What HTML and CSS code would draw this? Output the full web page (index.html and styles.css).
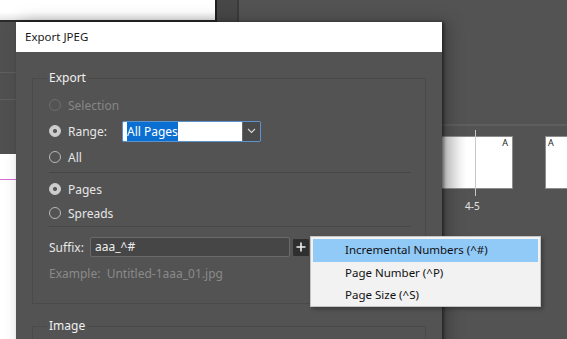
FILE: index.html
```html
<!DOCTYPE html>
<html lang="en">
  <head>
    <meta charset="utf-8">
    <title>Export JPEG</title>
    <meta name="viewport" content="width=device-width, initial-scale=1.0">
    <link rel="stylesheet" href="styles.css">
  </head>
  <body>
    <div class="desk">
      <div class="doc-top"></div>
      <div class="panel-strip"></div>
      <div class="left-pane">
        <div class="pane-bar"></div>
        <div class="pane-page"></div>
      </div>

      <div class="pasteboard">
        <div class="page"><span class="master">A</span></div>
        <div class="page page-right"><span class="master">A</span></div>
        <div class="spine"></div>
        <div class="spread-num">4-5</div>
      </div>

      <div class="dialog">
        <div class="title">Export JPEG</div>
        <div class="body">
          <div class="group">
            <div class="group-title">Export</div>
            <div class="row first disabled"><span class="radio"></span>Selection</div>
            <div class="row"><span class="radio on"></span>Range:
              <div class="combo">
                <span class="combo-text"><span class="sel">All Pages</span></span>
                <span class="combo-btn">
                  <svg width="9" height="6" viewBox="0 0 9 6"><path d="M1 1l3.5 3.5L8 1" fill="none" stroke="#d8d8d8" stroke-width="1.1"/></svg>
                </span>
              </div>
            </div>
            <div class="row"><span class="radio"></span>All</div>
            <div class="sep"></div>
            <div class="row short"><span class="radio on"></span>Pages</div>
            <div class="row short"><span class="radio"></span>Spreads</div>
            <div class="sep tight"></div>
            <div class="suffix-row">
              <span class="suffix-label">Suffix:</span>
              <div class="suffix-input">aaa_^#</div>
              <div class="plus">
                <svg width="10" height="10" viewBox="0 0 10 10"><path d="M5 0.5v9M0.5 5h9" stroke="#f0f0f0" stroke-width="1.6"/></svg>
              </div>
            </div>
            <div class="example">Example:&nbsp; Untitled-1aaa_01.jpg</div>
          </div>
          <div class="group second">
            <div class="group-title">Image</div>
          </div>
        </div>
      </div>

      <div class="menu">
        <div class="item active">Incremental Numbers (^#)</div>
        <div class="item">Page Number (^P)</div>
        <div class="item">Page Size (^S)</div>
      </div>
    </div>
  </body>
</html>
```

FILE: styles.css
```css
*{
    margin: 0;
    padding: 0;
    box-sizing: border-box;
}
body{
    font-family: "Noto Sans", "Open Sans", sans-serif;
    font-size: 12px;
    background: #535353;
}
.desk{
    position: relative;
    width: 567px;
    height: 339px;
    overflow: hidden;
    background: #535353;
}

/* things behind the dialog */
.doc-top{
    position: absolute;
    left: 0;
    top: 0;
    width: 217px;
    height: 22px;
    background: linear-gradient(#ffffff 60%, #e6e6e6);
    border-right: 2px solid #1f1f1f;
    border-bottom: 2px solid #2a2a2a;
}
.panel-strip{
    position: absolute;
    left: 217px;
    top: 0;
    width: 22px;
    height: 22px;
    background: #474747;
    border-right: 2px solid #3b3b3b;
}
.left-pane{
    position: absolute;
    left: 0;
    top: 22px;
    width: 16px;
    height: 317px;
    display: flex;
    flex-direction: column;
}
.pane-bar{
    height: 132px;
    background: linear-gradient(#505050 50px, #5f5f5f 50px, #5f5f5f 51px, #505050 51px, #505050 77px, #5f5f5f 77px, #5f5f5f 78px, #505050 78px);
}
.pane-page{
    flex: 1;
    background: linear-gradient(#ffffff 25px, #d86bd8 25px, #d86bd8 26px, #ffffff 26px);
}
.pasteboard{
    position: absolute;
    left: 400px;
    top: 124px;
    width: 167px;
    height: 100px;
    border-top: 2px solid #5e5e5e;
    padding-top: 10px;
    display: flex;
    gap: 32px;
}
.page{
    position: relative;
    width: 113px;
    height: 53px;
    flex-shrink: 0;
    background: linear-gradient(90deg, #d4d4d4 40px, #ffffff 65px);
    border: 1px solid #8c8c8c;
}
.page-right{
    background: #ffffff;
}
.master{
    position: absolute;
    top: 1px;
    right: 4px;
    font-size: 9px;
    line-height: 10px;
    color: #222;
}
.page-right .master{
    right: auto;
    left: 2px;
}
.spine{
    position: absolute;
    left: 75px;
    top: 4px;
    width: 1px;
    height: 66px;
    background: #c8c8c8;
}
.spread-num{
    position: absolute;
    left: 65px;
    top: 73px;
    font-size: 10px;
    color: #e4e4e4;
}

/* dialog */
.dialog{
    position: absolute;
    left: 16px;
    top: 22px;
    width: 426px;
    height: 330px;
    background: #535353;
    box-shadow: 2px 0 3px rgba(0,0,0,.45), 6px 0 16px rgba(0,0,0,.25);
}
.title{
    height: 30px;
    line-height: 30px;
    padding-left: 9px;
    background: #ffffff;
    color: #1a1a1a;
    font-size: 11.5px;
}
.body{
    padding: 26px 16px 0;
}
.group{
    border: 1px solid #4a4a4a;
    padding: 0 14px 20px 16px;
    color: #e6e6e6;
}
.group-title{
    width: fit-content;
    margin: -9px 0 0 -2px;
    padding: 0 2px;
    height: 16px;
    line-height: 16px;
    background: #535353;
    color: #f0f0f0;
}
.row{
    height: 26px;
    display: flex;
    align-items: center;
}
.row.first{
    margin-top: 6px;
}
.row.short{
    height: 24px;
}
.disabled{
    color: #868686;
}
.radio{
    width: 12px;
    height: 12px;
    border-radius: 50%;
    border: 1px solid #b8b8b8;
    margin-right: 7px;
    flex-shrink: 0;
}
.disabled .radio{
    border-color: #6e6e6e;
}
.radio.on{
    border-color: #cdcdcd;
    background: radial-gradient(circle, #5a5a5a 1.6px, #cdcdcd 2.4px);
}
.combo{
    display: flex;
    width: 139px;
    height: 21px;
    margin-left: 15px;
    border: 1px solid #5b93cf;
    border-radius: 2px;
    background: #ffffff;
}
.combo-text{
    flex: 1;
    padding: 1px 0 0 4px;
    line-height: 17px;
}
.sel{
    background: #0a6fd1;
    color: #ffffff;
    padding: 1px 0;
}
.combo-btn{
    width: 18px;
    background: #4a4a4a;
    border-left: 1px solid #6a6a6a;
    display: flex;
    align-items: center;
    justify-content: center;
}
.sep{
    height: 1px;
    background: #474747;
    margin: 2px 0 4px;
}
.sep.tight{
    margin: 1px 0 10px;
}
.suffix-row{
    display: flex;
    align-items: center;
    height: 20px;
}
.suffix-label{
    width: 41px;
}
.suffix-input{
    width: 200px;
    height: 20px;
    line-height: 18px;
    padding-left: 4px;
    background: #464646;
    border: 1px solid #6a6a6a;
    border-radius: 2px;
    color: #eeeeee;
}
.plus{
    width: 16px;
    height: 17px;
    margin-left: 3px;
    background: #2f2f2f;
    border-radius: 1px;
    display: flex;
    align-items: center;
    justify-content: center;
}
.example{
    margin-top: 8px;
    line-height: 18px;
    color: #8a8a8a;
}
.group.second{
    margin-top: 22px;
    height: 40px;
}

/* popup menu */
.menu{
    position: absolute;
    left: 310px;
    top: 236px;
    width: 231px;
    height: 71px;
    padding: 2px;
    background: #f2f2f2;
    border: 1px solid #c4c4c4;
    box-shadow: 2px 2px 4px rgba(0,0,0,.3);
    font-size: 11.5px;
}
.item{
    height: 22px;
    line-height: 22px;
    padding-left: 32px;
    color: #111;
}
.item.active{
    height: 23px;
    background: #91c9f7;
}
```
